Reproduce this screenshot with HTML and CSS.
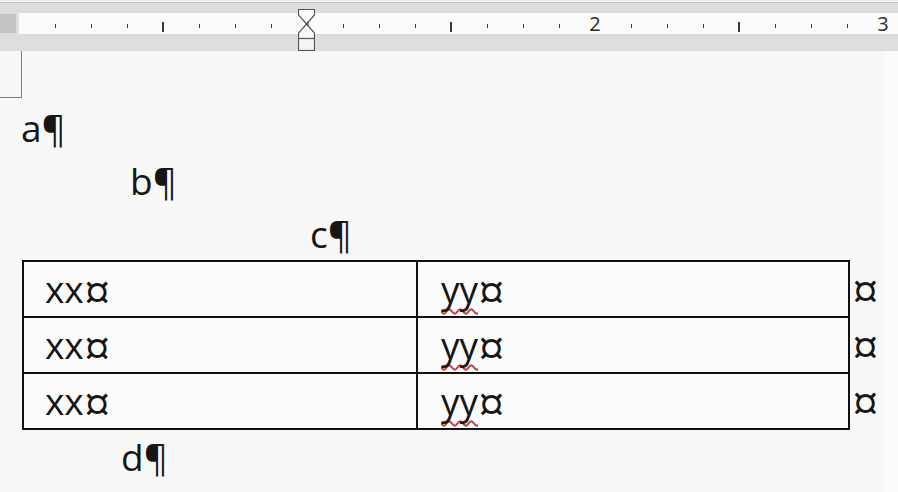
FILE: index.html
```html
<!DOCTYPE html>
<html lang="en">
<head>
<meta charset="utf-8">
<title>Document</title>
<link rel="stylesheet" href="styles.css">
</head>
<body>
<div class="ruler-bar">
  <div class="ruler-top"></div>
  <div class="ruler-band"></div>
  <div class="ruler-row">
    <div class="ruler-stub"></div>
    <div class="ruler-gap"></div>
    <div class="ruler-scale">
      <div class="cell"><span class="tick"></span></div>
      <div class="cell"><span class="tick"></span></div>
      <div class="cell"><span class="tick"></span></div>
      <div class="cell"><span class="tick long"></span></div>
      <div class="cell"><span class="tick"></span></div>
      <div class="cell"><span class="tick"></span></div>
      <div class="cell"><span class="tick"></span></div>
      <div class="cell num">1</div>
      <div class="cell"><span class="tick"></span></div>
      <div class="cell"><span class="tick"></span></div>
      <div class="cell"><span class="tick"></span></div>
      <div class="cell"><span class="tick long"></span></div>
      <div class="cell"><span class="tick"></span></div>
      <div class="cell"><span class="tick"></span></div>
      <div class="cell"><span class="tick"></span></div>
      <div class="cell num">2</div>
      <div class="cell"><span class="tick"></span></div>
      <div class="cell"><span class="tick"></span></div>
      <div class="cell"><span class="tick"></span></div>
      <div class="cell"><span class="tick long"></span></div>
      <div class="cell"><span class="tick"></span></div>
      <div class="cell"><span class="tick"></span></div>
      <div class="cell"><span class="tick"></span></div>
      <div class="cell num">3</div>
    </div>
  </div>
  <div class="ruler-band bottom"></div>
  <svg class="indent-marker" width="17" height="42" viewBox="0 0 17 42">
    <path d="M0.5 0.5 H16.5 V6 L8.5 15 L0.5 6 Z" fill="#fafafa" stroke="#555" stroke-width="1.2"/>
    <path d="M8.5 15 L16.5 24 V29.5 H0.5 V24 Z" fill="#fafafa" stroke="#555" stroke-width="1.2"/>
    <rect x="0.5" y="29.5" width="16" height="12" fill="#f4f4f4" stroke="#555" stroke-width="1.2"/>
  </svg>
</div>
<div class="page">
  <div class="corner"></div>
  <p class="para para-a">a¶</p>
  <p class="para para-b">b¶</p>
  <p class="para para-c">c¶</p>
  <table class="grid">
    <colgroup>
      <col class="col-x">
      <col class="col-y">
      <col class="col-end">
    </colgroup>
    <tr>
      <td class="cx">xx<span class="mk">¤</span></td>
      <td class="cy"><span class="spell">yy</span><span class="mk">¤</span></td>
      <td class="cend"><span class="mk">¤</span></td>
    </tr>
    <tr>
      <td class="cx">xx<span class="mk">¤</span></td>
      <td class="cy"><span class="spell">yy</span><span class="mk">¤</span></td>
      <td class="cend"><span class="mk">¤</span></td>
    </tr>
    <tr>
      <td class="cx">xx<span class="mk">¤</span></td>
      <td class="cy"><span class="spell">yy</span><span class="mk">¤</span></td>
      <td class="cend"><span class="mk">¤</span></td>
    </tr>
  </table>
  <p class="para para-d">d¶</p>
</div>
</body>
</html>
```

FILE: styles.css
```css
html, body {
  margin: 0;
  padding: 0;
}

body {
  width: 898px;
  height: 492px;
  overflow: hidden;
  background: #fcfcfc;
  font-family: "Open Sans", "Noto Sans", sans-serif;
  color: #161616;
}

.ruler-bar {
  position: relative;
  display: flex;
  flex-direction: column;
  height: 51px;
}

.ruler-top {
  height: 2px;
  background: #f0f0f0;
  border-bottom: 1px solid #c4c4c4;
}

.ruler-band {
  height: 10px;
  background: #dddddd;
}

.ruler-band.bottom {
  height: 17px;
}

.ruler-row {
  display: flex;
  height: 21px;
  background: #dddddd;
}

.ruler-stub {
  flex: 0 0 16px;
  height: 19px;
  margin-top: 1px;
  background: #c5c5c5;
}

.ruler-gap {
  flex: 0 0 3px;
}

.ruler-scale {
  flex: 1 1 auto;
  min-width: 0;
  display: flex;
  padding-left: 18px;
  background: #fbfbfb;
}

.cell {
  flex: 0 0 36px;
  width: 36px;
}

.tick {
  display: block;
  width: 1px;
  height: 4px;
  margin-top: 11px;
  margin-left: 18px;
  background: #3a3a3a;
}

.tick.long {
  width: 2px;
  height: 10px;
  margin-top: 9px;
  margin-left: 17px;
}

.num {
  text-align: center;
  font-size: 20px;
  line-height: 20px;
  padding-top: 1px;
  color: #2a2a2a;
}

.indent-marker {
  position: absolute;
  left: 298px;
  top: 9px;
}

.page {
  width: 885px;
  height: 441px;
  background: #f8f8f8;
  overflow: hidden;
}

.corner {
  width: 22px;
  height: 47px;
  box-sizing: border-box;
  border-right: 1px solid #7a7a7a;
  border-bottom: 1px solid #7a7a7a;
}

.para {
  margin: 0;
  font-size: 37px;
  line-height: 52px;
  white-space: nowrap;
}

.para-a {
  margin-top: 4px;
  padding-left: 21px;
}

.para-b {
  line-height: 54px;
  padding-left: 130px;
}

.para-c {
  line-height: 51px;
  padding-left: 310px;
}

.para-d {
  margin-top: 1px;
  padding-left: 121px;
}

.grid {
  margin-top: 1px;
  margin-left: 22px;
  border-collapse: collapse;
  table-layout: fixed;
  width: 866px;
}

.col-x {
  width: 394px;
}

.col-y {
  width: 432px;
}

.col-end {
  width: 40px;
}

.grid td {
  padding: 0;
  font-size: 37px;
  line-height: 54px;
  height: 54px;
  white-space: nowrap;
  vertical-align: top;
}

.grid td.cx,
.grid td.cy {
  border: 2px solid #111;
  background: #fbfbfb;
}

.grid td.cx {
  padding-left: 21px;
}

.grid td.cy {
  padding-left: 23px;
}

.grid td.cend {
  padding-left: 2px;
}

.mk {
  font-size: 47px;
  line-height: 1;
  vertical-align: -6px;
}

.spell {
  text-decoration: underline wavy #c8373a;
  text-decoration-thickness: 2px;
  text-underline-offset: 5px;
  text-decoration-skip-ink: none;
}
```
